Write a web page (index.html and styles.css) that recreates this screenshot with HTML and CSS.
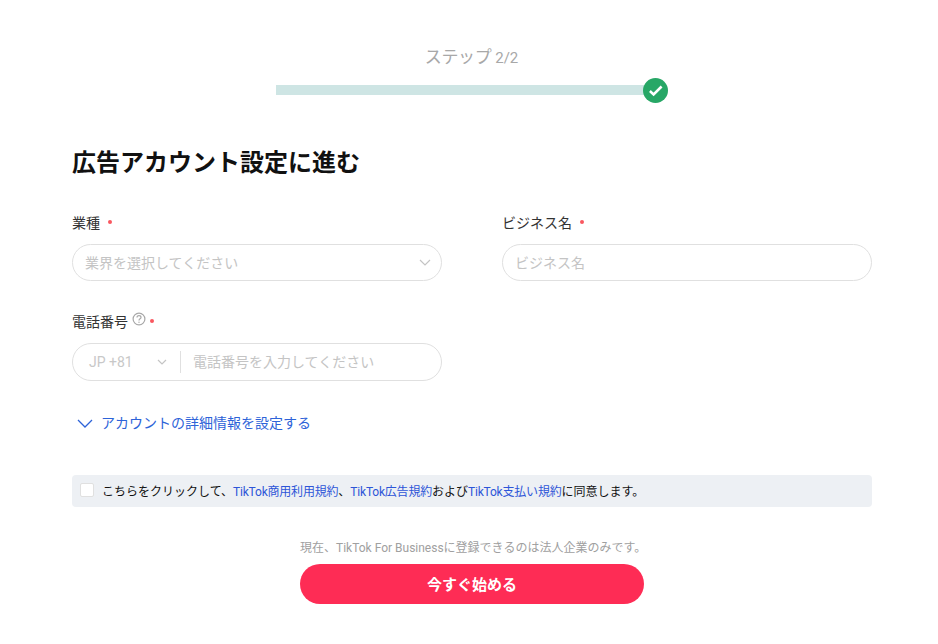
FILE: index.html
```html
<!DOCTYPE html>
<html lang="ja">
<head>
    <meta charset="UTF-8">
    <title>TikTok For Business</title>
    <link rel="stylesheet" href="styles.css">
</head>
<body>
    <div class="steps">
        <div class="stepTitle"><span class="stepJa">ステップ</span> 2/2</div>
        <div class="progress">
            <div class="bar"></div>
            <svg class="doneIcon" width="25" height="25" viewBox="0 0 25 25">
                <circle cx="12.5" cy="12.5" r="12.5" fill="#27a766"/>
                <path d="M6.9 13l3.7 3.5 8-8" fill="none" stroke="#fff" stroke-width="2.5"/>
            </svg>
        </div>
    </div>

    <h1>広告アカウント設定に進む</h1>

    <div class="formGrid">
        <div class="field">
            <div class="label">業種<span class="dot first"></span></div>
            <div class="box">
                <span class="placeholder">業界を選択してください</span>
                <svg class="chev" width="12" height="7" viewBox="0 0 12 7"><path d="M1 1l5 5 5-5" fill="none" stroke="#c4c4c4" stroke-width="1.2"/></svg>
            </div>
        </div>
        <div class="field">
            <div class="label">ビジネス名<span class="dot first"></span></div>
            <div class="box">
                <span class="placeholder">ビジネス名</span>
            </div>
        </div>
        <div class="field">
            <div class="label">電話番号
                <svg class="help" width="14" height="14" viewBox="0 0 14 14">
                    <circle cx="7" cy="7" r="5.9" fill="none" stroke="#a8a8a8" stroke-width="1.2"/>
                    <path d="M5 5.6c0-1.2.9-1.9 2-1.9s2 .7 2 1.7c0 1.4-2 1.4-2 3" fill="none" stroke="#a8a8a8" stroke-width="1.2"/>
                    <circle cx="7" cy="10.2" r=".7" fill="#a8a8a8"/>
                </svg><span class="dot"></span>
            </div>
            <div class="box phone">
                <span class="code">JP +81</span>
                <svg class="chev small" width="10" height="6" viewBox="0 0 10 6"><path d="M1 1l4 4 4-4" fill="none" stroke="#c4c4c4" stroke-width="1.2"/></svg>
                <span class="divider"></span>
                <span class="placeholder">電話番号を入力してください</span>
            </div>
        </div>
    </div>

    <a class="more">
        <svg width="16" height="9" viewBox="0 0 16 9"><path d="M1 1l7 7 7-7" fill="none" stroke="#2d63d8" stroke-width="1.3"/></svg>
        アカウントの詳細情報を設定する
    </a>

    <div class="agree">
        <span class="check"></span>
        <span>こちらをクリックして、<a>TikTok商用利用規約</a>、<a>TikTok広告規約</a>および<a>TikTok支払い規約</a>に同意します。</span>
    </div>

    <div class="submitArea">
        <p class="note">現在、TikTok For Businessに登録できるのは法人企業のみです。</p>
        <button class="start">今すぐ始める</button>
    </div>
</body>
</html>
```

FILE: styles.css
```css
body {
    margin: 0;
    padding: 0 66px 0 72px;
    background: #fff;
    font-family: Roboto, "Noto Sans CJK JP", sans-serif;
    color: #222;
}

.steps {
    padding-top: 46px;
}

.stepTitle {
    padding-right: 1px;
    text-align: center;
    font-size: 15px;
    line-height: 22px;
    color: #a8a8a8;
}

.stepJa {
    font-size: 17px;
    letter-spacing: -0.3px;
}

.progress {
    display: flex;
    align-items: center;
    margin: 9px 0 0 204px;
}

.bar {
    width: 368px;
    height: 10px;
    margin-bottom: 1px;
    background: #cee5e4;
}

.doneIcon {
    margin-left: -1px;
}

h1 {
    margin: 43px 0 0;
    font-size: 24px;
    line-height: 34px;
    font-weight: 700;
    color: #111;
}

.formGrid {
    display: grid;
    grid-template-columns: 370px 370px;
    column-gap: 60px;
    row-gap: 31px;
    margin-top: 33px;
}

.label {
    display: flex;
    align-items: center;
    height: 18px;
    font-size: 14px;
    color: #333;
}

.dot {
    width: 4px;
    height: 4px;
    margin-left: 4px;
    border-radius: 50%;
    background: #f9575f;
}

.dot.first {
    margin-left: 8px;
}

.help {
    margin: -4px 0 0 4px;
}

.box {
    display: flex;
    align-items: center;
    box-sizing: border-box;
    height: 37px;
    margin-top: 13px;
    padding: 0 12px;
    border: 1px solid #e0e0e0;
    border-radius: 19px;
    font-size: 14px;
}

.placeholder {
    margin-bottom: 2px;
    color: #c4c4c4;
}

.chev {
    margin-left: auto;
    margin-right: -2px;
}

.phone {
    height: 38px;
    padding-left: 16px;
}

.code {
    width: 68px;
    color: #c8c8c8;
}

.chev.small {
    margin-left: 0;
    margin-right: 0;
}

.divider {
    width: 1px;
    height: 22px;
    margin: 0 12px 0 13px;
    background: #e0e0e0;
}

.more {
    display: flex;
    align-items: center;
    gap: 8px;
    margin: 32px 0 0 5px;
    font-size: 14px;
    line-height: 20px;
    color: #2d63d8;
}

.agree {
    display: flex;
    align-items: center;
    box-sizing: border-box;
    gap: 8px;
    height: 32px;
    margin-top: 42px;
    padding: 0 0 2px 8px;
    border-radius: 4px;
    background: #edf0f4;
    font-size: 12px;
    color: #111;
}

.check {
    box-sizing: border-box;
    width: 14px;
    height: 14px;
    border: 1px solid #e0e0e0;
    border-radius: 2px;
    background: #fff;
}

.agree a {
    letter-spacing: -0.2px;
    color: #2d55d8;
}

.submitArea {
    width: 344px;
    margin: 33px auto 0;
    text-align: center;
}

.note {
    margin: 0;
    font-size: 12px;
    line-height: 17px;
    white-space: nowrap;
    color: #a0a0a0;
}

.start {
    display: block;
    width: 344px;
    height: 40px;
    margin-top: 7px;
    padding: 0 0 2px;
    border: 0;
    border-radius: 20px;
    background: #fe2c55;
    font-family: inherit;
    font-size: 15px;
    font-weight: 700;
    color: #fff;
}
```
